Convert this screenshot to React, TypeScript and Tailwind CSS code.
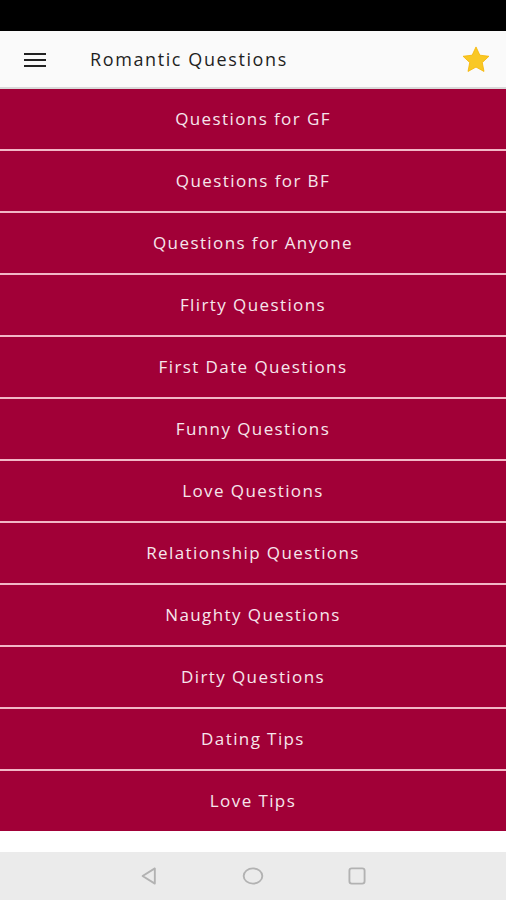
import React from 'react';

const categories: string[] = [
  'Questions for GF',
  'Questions for BF',
  'Questions for Anyone',
  'Flirty Questions',
  'First Date Questions',
  'Funny Questions',
  'Love Questions',
  'Relationship Questions',
  'Naughty Questions',
  'Dirty Questions',
  'Dating Tips',
  'Love Tips',
];

const HamburgerIcon: React.FC = () => (
  <svg width="24" height="24" viewBox="0 0 24 24" className="text-[#222]">
    <rect x="1" y="5" width="22" height="2" fill="currentColor" />
    <rect x="1" y="11" width="22" height="2" fill="currentColor" />
    <rect x="1" y="17" width="22" height="2" fill="currentColor" />
  </svg>
);

const StarIcon: React.FC = () => (
  <svg width="32" height="32" viewBox="0 0 24 24">
    <path
      d="M12 2.2l2.9 6.2 6.8.8-5 4.7 1.3 6.7L12 17.3l-6 3.3 1.3-6.7-5-4.7 6.8-.8z"
      fill="#f9c825"
      stroke="#f5b400"
      strokeWidth="0.6"
      strokeLinejoin="round"
    />
  </svg>
);

export default function App() {
  return (
    <div className="w-[506px] h-[900px] flex flex-col bg-white font-['Open_Sans',sans-serif] overflow-hidden">
      {/* status bar */}
      <div className="h-[31px] bg-black shrink-0" />

      {/* app bar */}
      <div className="h-[58px] shrink-0 flex items-center pt-[1px] bg-[#fafafa] border-b-2 border-[#d9d9d9]">
        <div className="w-[90px] pl-[23px] flex items-center">
          <HamburgerIcon />
        </div>
        <div className="flex-1 text-[18px] text-[#1f1f1f] font-medium tracking-[1.6px]">
          Romantic Questions
        </div>
        <div className="pr-[14px] flex items-center">
          <StarIcon />
        </div>
      </div>

      {/* category list */}
      <div className="flex flex-col gap-[2px] bg-[#f2b7c6] shrink-0 shadow-[0_2px_2px_rgba(0,0,0,0.2)]">
        {categories.map((label) => (
          <div
            key={label}
            className="h-[60px] flex items-center justify-center bg-[#a10037] text-[#f6e6ec] text-[17px] font-medium tracking-[1.4px]"
          >
            {label}
          </div>
        ))}
      </div>

      <div className="flex-1 bg-white" />

      {/* navigation bar */}
      <div className="h-[48px] shrink-0 bg-[#ebebeb] flex items-center justify-center gap-[76px]">
        <svg width="28" height="28" viewBox="0 0 24 24" fill="none" stroke="#b2b2b2" strokeWidth="1.6" strokeLinejoin="round">
          <path d="M17 5.5v13L6.5 12z" />
        </svg>
        <svg width="28" height="28" viewBox="0 0 24 24" fill="none" stroke="#b2b2b2" strokeWidth="1.6">
          <ellipse cx="12" cy="12" rx="8" ry="6.5" />
        </svg>
        <svg width="28" height="28" viewBox="0 0 24 24" fill="none" stroke="#b2b2b2" strokeWidth="1.6">
          <rect x="5.5" y="5.5" width="13" height="13" rx="2" />
        </svg>
      </div>
    </div>
  );
}
